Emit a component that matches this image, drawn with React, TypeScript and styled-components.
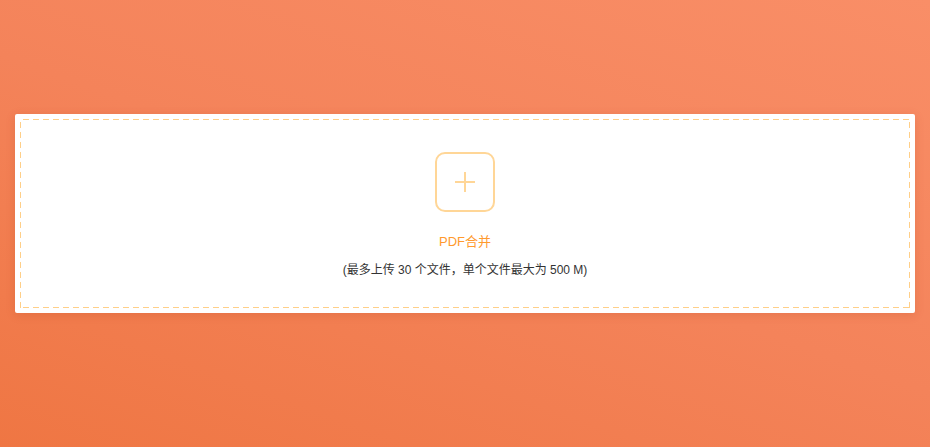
import React from "react";
import styled, { createGlobalStyle } from "styled-components";

const GlobalStyle = createGlobalStyle`
  html, body {
    margin: 0;
    padding: 0;
  }
  body {
    font-family: "Liberation Sans", Arial, "Noto Sans CJK SC", sans-serif;
  }
`;

const Page = styled.div`
  width: 100vw;
  height: 100vh;
  box-sizing: border-box;
  padding: 114px 15px 0;
  background: linear-gradient(20deg, #ef7643 0%, #f4835a 50%, #f98e67 100%);
`;

const Card = styled.div`
  background: #fff;
  border-radius: 2px;
  padding: 5px;
  box-shadow: 0 2px 10px rgba(160, 60, 20, 0.18);
`;

const dash = "#ffcf88";

// 6px dash / 4px gap, drawn by hand so the dashes are longer than the browser default
const DropZone = styled.div`
  height: 189px;
  box-sizing: border-box;
  background-image:
    repeating-linear-gradient(90deg, ${dash} 0 6px, transparent 6px 10px),
    repeating-linear-gradient(90deg, ${dash} 0 6px, transparent 6px 10px),
    repeating-linear-gradient(180deg, ${dash} 0 6px, transparent 6px 10px),
    repeating-linear-gradient(180deg, ${dash} 0 6px, transparent 6px 10px);
  background-size: 100% 1px, 100% 1px, 1px 100%, 1px 100%;
  background-position: 3px 0, 3px 100%, 0 3px, 100% 3px;
  background-repeat: no-repeat;
  display: flex;
  flex-direction: column;
  align-items: center;
  padding-top: 33px;
  cursor: pointer;
`;

const AddBox = styled.div`
  width: 60px;
  height: 60px;
  box-sizing: border-box;
  border: 2px solid #ffd697;
  border-radius: 10px;
  display: flex;
  align-items: center;
  justify-content: center;
`;

const Title = styled.div`
  margin-top: 22px;
  font-size: 13px;
  line-height: 16px;
  color: #ff9a2e;
`;

const Hint = styled.div`
  margin-top: 13px;
  font-size: 12px;
  line-height: 14px;
  color: #333;
`;

const PlusIcon = () => (
  <svg width="22" height="22" viewBox="0 0 22 22">
    <path d="M11 1v20M1 11h20" stroke="#ffd697" strokeWidth="2" fill="none" />
  </svg>
);

export default function App() {
  return (
    <Page>
      <GlobalStyle />
      <Card>
        <DropZone>
          <AddBox>
            <PlusIcon />
          </AddBox>
          <Title>PDF合并</Title>
          <Hint>(最多上传 30 个文件，单个文件最大为 500 M)</Hint>
        </DropZone>
      </Card>
    </Page>
  );
}
